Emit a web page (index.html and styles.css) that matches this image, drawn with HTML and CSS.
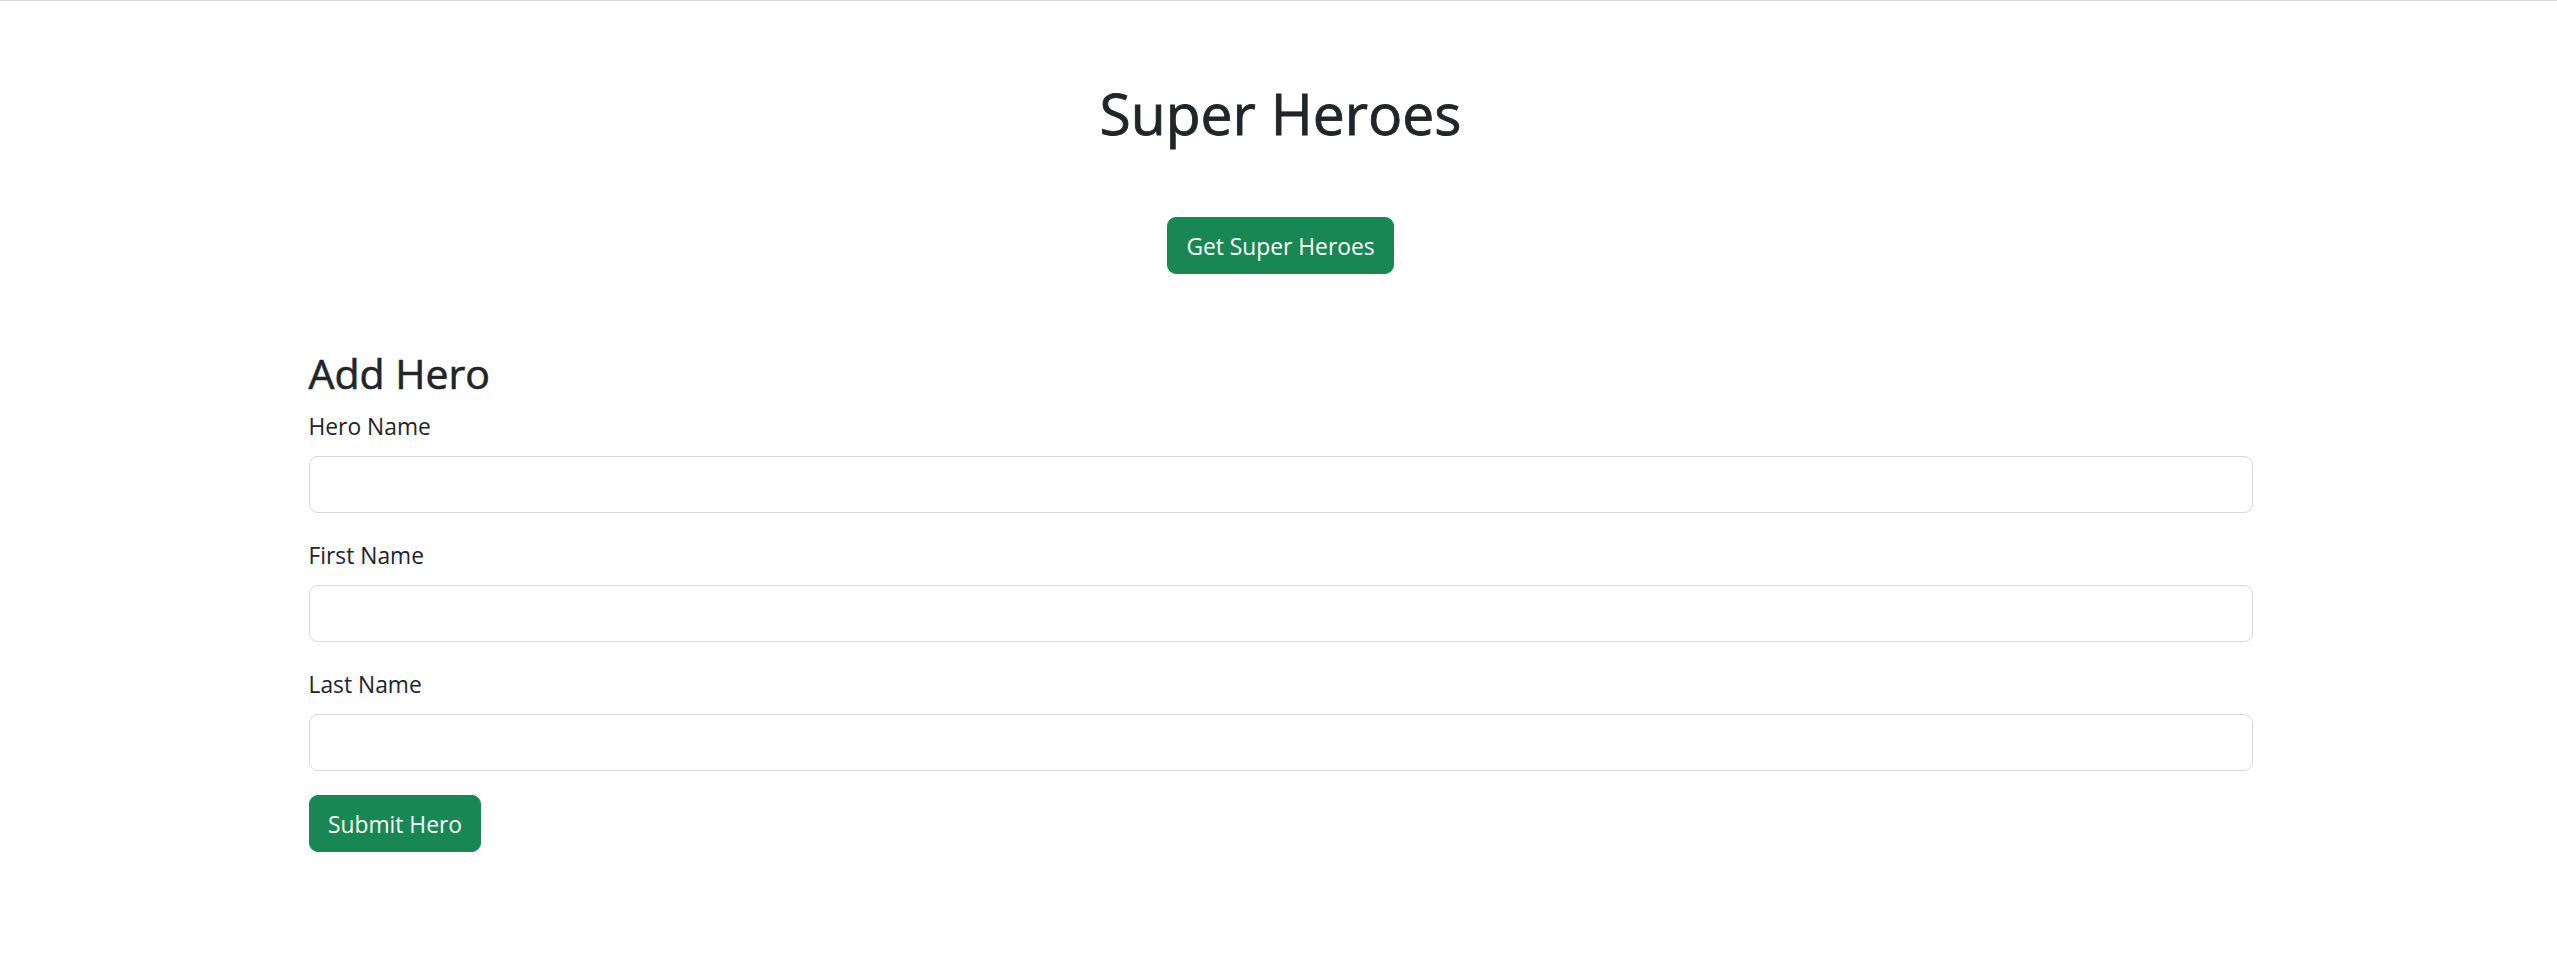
FILE: index.html
```html
<!DOCTYPE html>
<html lang="en">
<head>
<meta charset="utf-8">
<title>Super Heroes</title>
<link rel="stylesheet" href="styles.css">
</head>
<body>
<div class="page">
  <header class="hero-header">
    <h1 class="title">Super Heroes</h1>
    <button type="button" class="btn btn-success">Get Super Heroes</button>
  </header>
  <section class="add-hero">
    <h3 class="section-title">Add Hero</h3>
    <form class="hero-form">
      <div class="field">
        <label class="field-label" for="heroName">Hero Name</label>
        <input class="field-input" id="heroName" type="text">
      </div>
      <div class="field">
        <label class="field-label" for="firstName">First Name</label>
        <input class="field-input" id="firstName" type="text">
      </div>
      <div class="field">
        <label class="field-label" for="lastName">Last Name</label>
        <input class="field-input" id="lastName" type="text">
      </div>
      <div class="form-actions">
        <button type="button" class="btn btn-success">Submit Hero</button>
      </div>
    </form>
  </section>
</div>
</body>
</html>
```

FILE: styles.css
```css
html, body {
  margin: 0;
  padding: 0;
  background: #fff;
}

body {
  border-top: 1px solid #dcdcdc;
  font-family: "Open Sans", "Noto Sans", sans-serif;
  font-size: 22.8px;
  line-height: 36px;
  color: #212529;
  padding-left: 4px;
}

.page {
  width: 1944px;
  margin: 0 auto;
  padding-top: 76px;
}

.hero-header {
  display: flex;
  flex-direction: column;
  align-items: center;
}

.title {
  margin: 0;
  font-size: 57px;
  line-height: 72px;
  font-weight: 400;
  -webkit-text-stroke: 0.8px #212529;
}

.btn {
  box-sizing: border-box;
  height: 57px;
  font-family: inherit;
  font-size: 22.8px;
  line-height: 36px;
  padding: 10.5px 18.5px 7.5px;
  border: 1.5px solid transparent;
  border-radius: 9px;
  cursor: pointer;
}

.btn-success {
  background: #198754;
  border-color: #198754;
  color: #fff;
}

.hero-header .btn {
  margin-top: 68px;
}

.add-hero {
  margin-top: 74px;
}

.section-title {
  margin: 0 0 10px;
  font-size: 41px;
  line-height: 50px;
  font-weight: 400;
  -webkit-text-stroke: 0.6px #212529;
}

.hero-form {
  display: flex;
  flex-direction: column;
  gap: 24px;
}

.field {
  display: flex;
  flex-direction: column;
}

.field-label {
  padding-top: 1px;
  margin-bottom: 11px;
}

.field-input {
  box-sizing: border-box;
  height: 57px;
  width: 100%;
  padding: 9px 18px;
  font-family: inherit;
  font-size: 22.8px;
  border: 1.5px solid #d6d9dc;
  border-radius: 9px;
  background: #fff;
}

.form-actions {
  display: flex;
}
```
